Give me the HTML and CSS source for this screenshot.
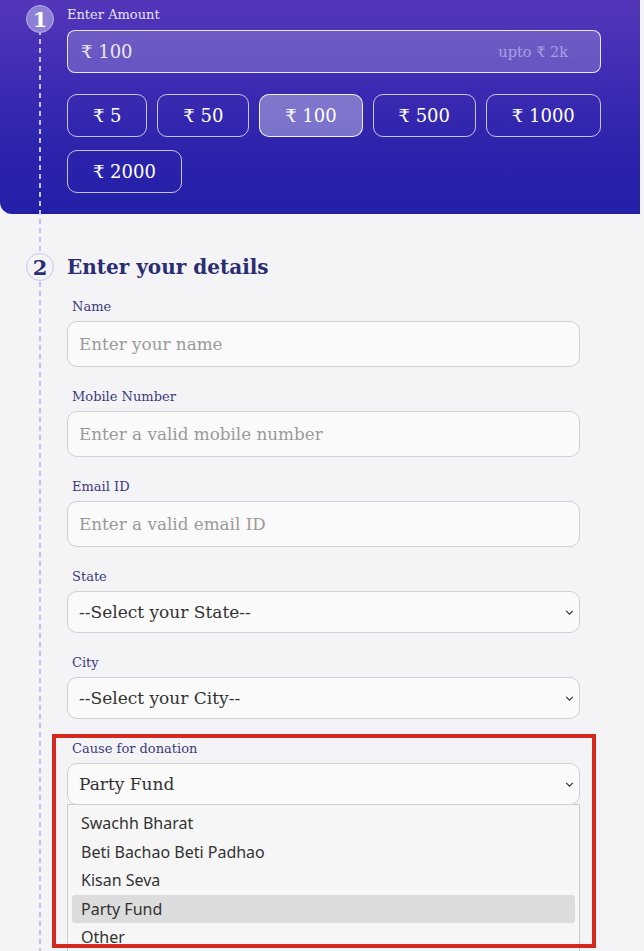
FILE: index.html
```html
<!DOCTYPE html>
<html lang="en">
<head>
<meta charset="utf-8">
<title>Donate</title>
<link rel="stylesheet" href="styles.css">
</head>
<body>
<div class="page">
  <section class="step-amount">
    <div class="rail"><span class="step-num num-1">1</span></div>
    <div class="amount-body">
      <label class="amount-label" for="amt">Enter Amount</label>
      <div class="amount-box">
        <input id="amt" class="amount-input" type="text" value="₹ 100">
        <span class="amount-limit">upto ₹ 2k</span>
      </div>
      <div class="chips">
        <button class="chip">₹ 5</button>
        <button class="chip">₹ 50</button>
        <button class="chip chip-active">₹ 100</button>
        <button class="chip">₹ 500</button>
        <button class="chip">₹ 1000</button>
        <button class="chip">₹ 2000</button>
      </div>
    </div>
  </section>

  <section class="step-details">
    <div class="step-head">
      <span class="step-num num-2">2</span>
      <h2 class="step-title">Enter your details</h2>
    </div>
    <div class="fields">
      <div class="field">
        <label class="field-label">Name</label>
        <input class="text-input" type="text" placeholder="Enter your name">
      </div>
      <div class="field">
        <label class="field-label">Mobile Number</label>
        <input class="text-input" type="text" placeholder="Enter a valid mobile number">
      </div>
      <div class="field">
        <label class="field-label">Email ID</label>
        <input class="text-input" type="text" placeholder="Enter a valid email ID">
      </div>
      <div class="field">
        <label class="field-label">State</label>
        <div class="select-wrap">
          <select class="select-input"><option>--Select your State--</option></select>
          <svg class="chevron" width="10" height="6" viewBox="0 0 10 6"><path d="M1 1 L5 5 L9 1" fill="none" stroke="#333" stroke-width="1.4"/></svg>
        </div>
      </div>
      <div class="field">
        <label class="field-label">City</label>
        <div class="select-wrap">
          <select class="select-input"><option>--Select your City--</option></select>
          <svg class="chevron" width="10" height="6" viewBox="0 0 10 6"><path d="M1 1 L5 5 L9 1" fill="none" stroke="#333" stroke-width="1.4"/></svg>
        </div>
      </div>
      <div class="field field-cause">
        <label class="field-label">Cause for donation</label>
        <div class="select-wrap">
          <select class="select-input"><option>Party Fund</option></select>
          <svg class="chevron" width="10" height="6" viewBox="0 0 10 6"><path d="M1 1 L5 5 L9 1" fill="none" stroke="#333" stroke-width="1.4"/></svg>
        </div>
        <ul class="dropdown">
          <li class="opt">Swachh Bharat</li>
          <li class="opt">Beti Bachao Beti Padhao</li>
          <li class="opt">Kisan Seva</li>
          <li class="opt opt-selected">Party Fund</li>
          <li class="opt">Other</li>
        </ul>
        <div class="highlight-box"></div>
      </div>
    </div>
  </section>
</div>
</body>
</html>
```

FILE: styles.css
```css
* { box-sizing: border-box; }

html, body {
  margin: 0;
  padding: 0;
  background: #f4f4f6;
  height: 951px;
  overflow: hidden;
}

body {
  font-family: "DejaVu Serif", "Liberation Serif", serif;
}

.page {
  position: relative;
  width: 644px;
}

.page::before {
  content: "";
  position: absolute;
  left: 39px;
  top: 30px;
  bottom: -400px;
  width: 2px;
  background: repeating-linear-gradient(180deg, #c5c0f2 0 5px, transparent 5px 9px);
  z-index: 1;
}

/* ---------- Step 1 ---------- */
.step-amount {
  width: 640px;
  display: grid;
  grid-template-columns: 28px 1fr;
  column-gap: 13px;
  padding: 5px 39px 21px 26px;
  background: linear-gradient(180deg, #5436b9 0%, #3c2bb2 40%, #2a22ab 75%, #2320a7 100%);
  border-bottom-left-radius: 12px;
}

.rail {
  position: relative;
  z-index: 2;
}

.step-num {
  display: flex;
  align-items: center;
  justify-content: center;
  width: 28px;
  height: 28px;
  border-radius: 50%;
  font-weight: bold;
  font-size: 21px;
  line-height: 1;
  position: relative;
  z-index: 2;
}

.num-1 {
  background: #8d80d6;
  border: 1px solid #b6aceb;
  color: #ffffff;
}

.num-2 {
  background: #f4f4f6;
  border: 1px solid #c8c6ee;
  color: #2b2d72;
}

.amount-body {
  min-width: 0;
}

.amount-label {
  display: block;
  font-size: 13px;
  line-height: 20px;
  color: #e6e3f8;
  margin-bottom: 5px;
}

.amount-box {
  display: flex;
  align-items: center;
  height: 43px;
  border: 1px solid rgba(255, 255, 255, 0.85);
  border-radius: 8px;
  background: rgba(255, 255, 255, 0.2);
  padding: 0 32px 0 13px;
}

.amount-input {
  flex: 1;
  min-width: 0;
  border: 0;
  background: transparent;
  font-family: inherit;
  font-size: 18px;
  color: #ebe8fa;
  padding: 0;
  outline: none;
}

.amount-limit {
  font-size: 14.5px;
  color: #a99fe2;
}

.chips {
  display: flex;
  flex-wrap: wrap;
  column-gap: 10px;
  row-gap: 13px;
  margin-top: 21px;
  margin-right: -4px;
}

.chip {
  height: 43px;
  padding: 0 24.9px;
  border: 1px solid rgba(255, 255, 255, 0.72);
  border-radius: 10px;
  background: transparent;
  color: #ffffff;
  font-family: inherit;
  font-size: 18px;
}

.chip-active {
  background: rgba(255, 255, 255, 0.36);
  border-color: rgba(255, 255, 255, 0.9);
}

/* ---------- Step 2 ---------- */
.step-details {
  padding: 39px 64px 0 26px;
}

.step-head {
  display: flex;
  align-items: center;
  gap: 13px;
  height: 28px;
}

.step-title {
  margin: 0;
  font-size: 20px;
  font-weight: bold;
  color: #2b2d72;
  line-height: 28px;
}

.fields {
  margin-left: 41px;
  margin-top: 16px;
  display: flex;
  flex-direction: column;
  gap: 20px;
}

.field-label {
  display: block;
  font-size: 13px;
  line-height: 20px;
  padding-left: 5px;
  color: #3b3a80;
  margin-bottom: 4px;
}

.text-input {
  display: block;
  width: 100%;
  height: 46px;
  border: 1px solid #cfcfd2;
  border-radius: 10px;
  background: #fafafa;
  padding: 0 11px;
  font-family: inherit;
  font-size: 16.8px;
  color: #333;
}

.text-input::placeholder {
  color: #9a9a9a;
}

.select-wrap {
  position: relative;
}

.select-input {
  display: block;
  width: 100%;
  height: 42px;
  border: 1px solid #cfcfd2;
  border-radius: 10px;
  background-color: #fafafa;
  padding: 0 30px 0 11px;
  font-family: inherit;
  font-size: 17px;
  color: #333;
  appearance: none;
  -webkit-appearance: none;
}

.chevron {
  position: absolute;
  right: 6px;
  top: 50%;
  margin-top: -2px;
  width: 9px;
  height: 5px;
  pointer-events: none;
}

.field-cause {
  position: relative;
}

.dropdown {
  list-style: none;
  margin: -1px 0 0 0;
  padding: 4px 4px 0 4px;
  height: 200px;
  background: #f6f6f6;
  border: 1px solid #cacaca;
  border-radius: 0 0 5px 5px;
  font-family: "Noto Sans", "DejaVu Sans", sans-serif;
  font-size: 16px;
  color: #333;
}

.opt {
  height: 28.5px;
  line-height: 28.5px;
  padding-left: 9px;
  border-radius: 3px;
}

.opt-selected {
  background: #dcdcdc;
}

.highlight-box {
  position: absolute;
  left: -15px;
  right: -16px;
  top: -5px;
  height: 214px;
  border: 4px solid #d3291f;
  z-index: 3;
  pointer-events: none;
}
```
